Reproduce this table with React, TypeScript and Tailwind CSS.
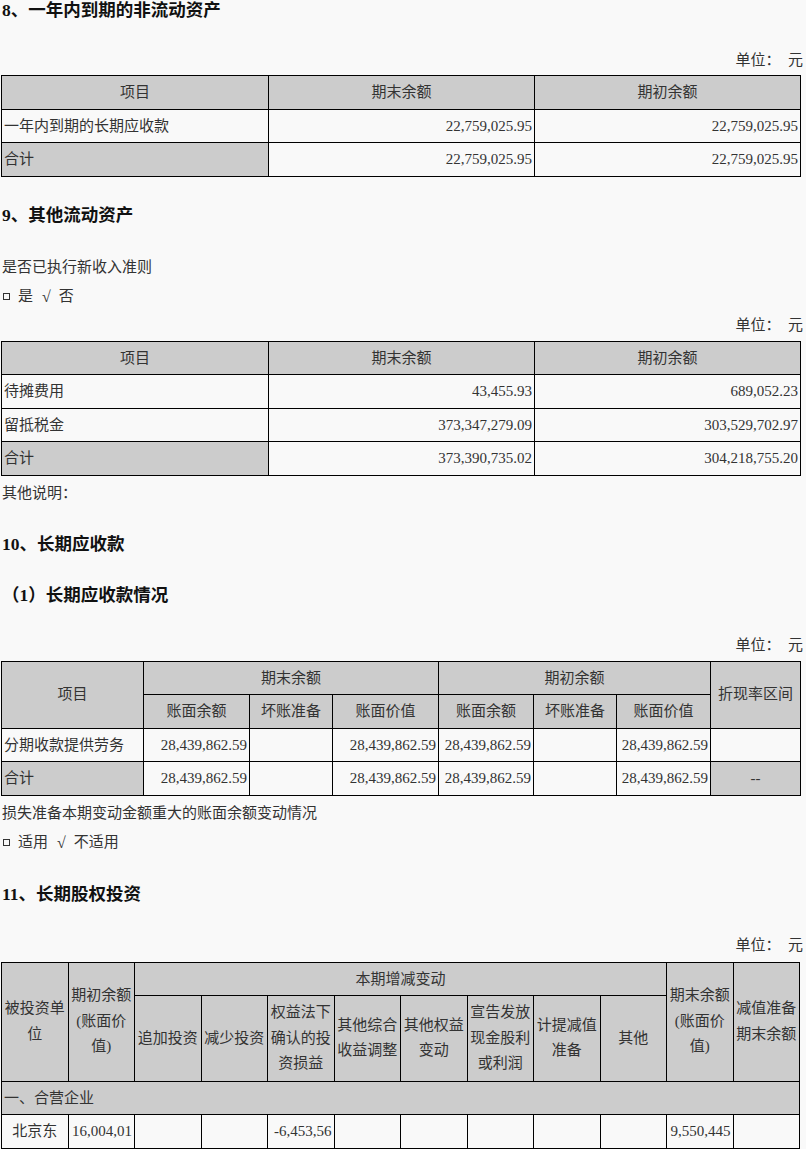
const font = "font-['Liberation_Serif','Noto_Sans_CJK_SC',serif]";

const th = "border border-black bg-[#cccccc] px-[2px] py-1 text-center align-middle font-normal leading-[24.5px]";
const th2 = "border border-black bg-[#cccccc] px-[2px] py-1 text-center align-middle font-normal leading-[25.5px]";
const td = "border border-black px-[2px] py-1 leading-[24.5px] whitespace-nowrap overflow-hidden";
const gray = "border border-black bg-[#cccccc] px-[2px] py-1 leading-[24.5px]";

function Heading({ children, className = "" }: { children: React.ReactNode; className?: string }) {
  return <h3 className={`h-[20px] pl-[2px] text-[17.5px] font-bold leading-[20px] text-[#111] ${className}`}>{children}</h3>;
}

function Unit({ className = "" }: { className?: string }) {
  return <div className={`h-[25px] pr-[3px] text-right leading-[25px] ${className}`}>单位：&nbsp;&nbsp;元</div>;
}

function Line({ children, className = "" }: { children: React.ReactNode; className?: string }) {
  return <div className={`h-[25px] pl-[2px] leading-[25px] ${className}`}>{children}</div>;
}

function Choice({ yes, no, className = "" }: { yes: string; no: string; className?: string }) {
  return (
    <div className={`flex h-[25px] items-center leading-[25px] ${className}`}>
      <span className="ml-[3px] inline-block h-[7px] w-[7px] border border-[#333]" />
      <span className="ml-[8px]">{yes}</span>
      <span className="ml-[9px] text-[16px]">√</span>
      <span className="ml-[8px]">{no}</span>
    </div>
  );
}

function SimpleTable({ rows }: { rows: [string, string, string][] }) {
  return (
    <table className="ml-[1px] w-[799px] table-fixed border-collapse">
      <colgroup>
        <col className="w-[267px]" />
        <col className="w-[266px]" />
        <col className="w-[266px]" />
      </colgroup>
      <thead>
        <tr>
          <th className={th}>项目</th>
          <th className={th}>期末余额</th>
          <th className={th}>期初余额</th>
        </tr>
      </thead>
      <tbody>
        {rows.map(([name, a, b]) => (
          <tr key={name}>
            <td className={name === "合计" ? gray : td}>{name}</td>
            <td className={`${td} text-right`}>{a}</td>
            <td className={`${td} text-right`}>{b}</td>
          </tr>
        ))}
      </tbody>
    </table>
  );
}

export default function App() {
  const v = "28,439,862.59";
  return (
    <div className={`min-h-[1149px] w-[806px] bg-[#f9f9f9] text-[15px] text-[#333] ${font}`}>
      <Heading>8、一年内到期的非流动资产</Heading>
      <Unit className="mt-[28px]" />
      <div className="mt-[2px]">
        <SimpleTable
          rows={[
            ["一年内到期的长期应收款", "22,759,025.95", "22,759,025.95"],
            ["合计", "22,759,025.95", "22,759,025.95"],
          ]}
        />
      </div>

      <Heading className="mt-[28px]">9、其他流动资产</Heading>
      <Line className="mt-[30px]">是否已执行新收入准则</Line>
      <Choice yes="是" no="否" className="mt-[4px]" />
      <Unit className="mt-[4px]" />
      <div className="mt-[3px]">
        <SimpleTable
          rows={[
            ["待摊费用", "43,455.93", "689,052.23"],
            ["留抵税金", "373,347,279.09", "303,529,702.97"],
            ["合计", "373,390,735.02", "304,218,755.20"],
          ]}
        />
      </div>
      <Line className="mt-[5px]">其他说明：</Line>

      <Heading className="mt-[28px]">10、长期应收款</Heading>
      <Heading className="mt-[31px]">（1）长期应收款情况</Heading>
      <Unit className="mt-[28px]" />
      <table className="ml-[1px] mt-[3px] w-[799px] table-fixed border-collapse">
        <colgroup>
          <col className="w-[142px]" />
          <col className="w-[106px]" />
          <col className="w-[83px]" />
          <col className="w-[106px]" />
          <col className="w-[95px]" />
          <col className="w-[83px]" />
          <col className="w-[94px]" />
          <col className="w-[90px]" />
        </colgroup>
        <thead>
          <tr>
            <th rowSpan={2} className={th}>项目</th>
            <th colSpan={3} className={th}>期末余额</th>
            <th colSpan={3} className={th}>期初余额</th>
            <th rowSpan={2} className={th}>折现率区间</th>
          </tr>
          <tr>
            <th className={th}>账面余额</th>
            <th className={th}>坏账准备</th>
            <th className={th}>账面价值</th>
            <th className={th}>账面余额</th>
            <th className={th}>坏账准备</th>
            <th className={th}>账面价值</th>
          </tr>
        </thead>
        <tbody>
          <tr>
            <td className={td}>分期收款提供劳务</td>
            <td className={`${td} text-right`}>{v}</td>
            <td className={td}></td>
            <td className={`${td} text-right`}>{v}</td>
            <td className={`${td} text-right`}>{v}</td>
            <td className={td}></td>
            <td className={`${td} text-right`}>{v}</td>
            <td className={td}></td>
          </tr>
          <tr>
            <td className={gray}>合计</td>
            <td className={`${td} text-right`}>{v}</td>
            <td className={td}></td>
            <td className={`${td} text-right`}>{v}</td>
            <td className={`${td} text-right`}>{v}</td>
            <td className={td}></td>
            <td className={`${td} text-right`}>{v}</td>
            <td className={`${gray} text-center`}>--</td>
          </tr>
        </tbody>
      </table>
      <Line className="mt-[5px]">损失准备本期变动金额重大的账面余额变动情况</Line>
      <Choice yes="适用" no="不适用" className="mt-[4px]" />

      <Heading className="mt-[29px]">11、长期股权投资</Heading>
      <Unit className="mt-[29px]" />
      <table className="ml-[1px] mt-[4px] w-[799px] table-fixed border-collapse">
        <thead>
          <tr>
            <th rowSpan={2} className={th2}>被投资单位</th>
            <th rowSpan={2} className={th2}>期初余额(账面价值)</th>
            <th colSpan={8} className={th}>本期增减变动</th>
            <th rowSpan={2} className={th2}>期末余额(账面价值)</th>
            <th rowSpan={2} className={th2}>减值准备期末余额</th>
          </tr>
          <tr>
            <th className={th2}>追加投资</th>
            <th className={th2}>减少投资</th>
            <th className={th2}>权益法下确认的投资损益</th>
            <th className={th2}>其他综合收益调整</th>
            <th className={th2}>其他权益变动</th>
            <th className={th2}>宣告发放现金股利或利润</th>
            <th className={th2}>计提减值准备</th>
            <th className={th2}>其他</th>
          </tr>
        </thead>
        <tbody>
          <tr>
            <td colSpan={12} className={gray}>一、合营企业</td>
          </tr>
          <tr>
            <td className={`${td} text-center`}>北京东</td>
            <td className={`${td} text-right`}>16,004,01</td>
            <td className={td}></td>
            <td className={td}></td>
            <td className={`${td} text-right`}>-6,453,56</td>
            <td className={td}></td>
            <td className={td}></td>
            <td className={td}></td>
            <td className={td}></td>
            <td className={td}></td>
            <td className={`${td} text-right`}>9,550,445</td>
            <td className={td}></td>
          </tr>
        </tbody>
      </table>
    </div>
  );
}
